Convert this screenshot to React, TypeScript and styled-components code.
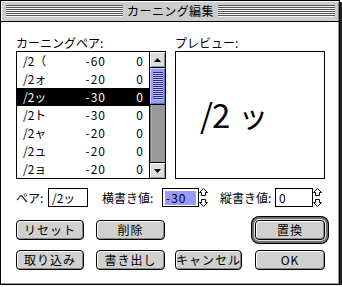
import React from "react";
import styled, { createGlobalStyle } from "styled-components";

const Global = createGlobalStyle`
  html, body { margin: 0; padding: 0; background: #fff; }
  body {
    font-family: "Noto Sans CJK JP", "Noto Sans", sans-serif;
    font-size: 12px;
    color: #000;
  }
  * { box-sizing: border-box; }
`;

const Window = styled.div`
  width: 340px;
  height: 285px;
  border: 1px solid #000;
  box-shadow: 2px 2px 0 #222;
  display: flex;
  flex-direction: column;
  background: #fff;
`;

const TitleBar = styled.div`
  flex: none;
  height: 21px;
  background: #cccccc;
  border-bottom: 1px solid #000;
  box-shadow: inset 1px 1px 0 #fff, inset -1px 0 0 #888;
  display: flex;
  align-items: center;
  padding: 0 4px 0 5px;
`;

const Stripes = styled.div`
  flex: 1;
  height: 12px;
  background: repeating-linear-gradient(to bottom, #555 0 1px, #f4f4f4 1px 2px);
`;

const TitleText = styled.div`
  flex: none;
  padding: 0 4px;
  font-size: 12px;
  line-height: 20px;
  letter-spacing: 0.4px;
`;

const Content = styled.div`
  flex: 1;
  padding: 14px 0 0 15px;
  display: flex;
  flex-direction: column;
  box-shadow: inset -1px -1px 0 #999;
`;

const TopGrid = styled.div`
  display: grid;
  grid-template-columns: 150px 150px;
  column-gap: 9px;
  row-gap: 1px;
`;

const Label = styled.div`
  font-size: 12px;
  line-height: 14px;
  white-space: nowrap;
`;

const ListBox = styled.div`
  height: 128px;
  border: 1px solid #000;
  display: flex;
`;

const Rows = styled.div`
  flex: 1;
  display: flex;
  flex-direction: column;
`;

const Row = styled.div<{ $selected?: boolean }>`
  height: 18px;
  line-height: 18px;
  display: grid;
  grid-template-columns: 45px 38px 38px;
  padding-left: 6px;
  background: ${(p) => (p.$selected ? "#000" : "#fff")};
  color: ${(p) => (p.$selected ? "#fff" : "#000")};
  white-space: nowrap;
`;

const Cell = styled.span<{ $right?: boolean }>`
  text-align: ${(p) => (p.$right ? "right" : "left")};
  letter-spacing: ${(p) => (p.$right ? "1px" : "0")};
`;

const ScrollBar = styled.div`
  width: 16px;
  border-left: 1px solid #000;
  display: flex;
  flex-direction: column;
`;

const ArrowBtn = styled.div<{ $down?: boolean }>`
  flex: none;
  height: 16px;
  background: #dddddd;
  ${(p) => (p.$down ? "border-top: 1px solid #000;" : "border-bottom: 1px solid #000;")}
  box-shadow: inset 1px 1px 0 #fff, inset -1px -1px 0 #999;
  display: flex;
  align-items: center;
  justify-content: center;
`;

const Thumb = styled.div`
  flex: none;
  height: 37px;
  background: #9c9cff;
  border-bottom: 1px solid #000;
  box-shadow: inset 1px 1px 0 #ccccff, inset -1px -1px 0 #6666cc;
  padding: 4px 2px 4px 3px;
  display: flex;
`;

const Grip = styled.div`
  flex: 1;
  background: repeating-linear-gradient(to bottom, #2a2a8a 0 1px, #c4c4ff 1px 2px);
`;

const Track = styled.div`
  flex: 1;
  background: #999999;
  box-shadow: inset 1px 0 0 #777, inset 2px 0 0 #aaa;
`;

const Preview = styled.div`
  height: 128px;
  border: 1px solid #000;
  display: flex;
  align-items: center;
  padding: 0 0 2px 24px;
  font-size: 33px;
  line-height: 1;
`;

const PreviewPair = styled.span`
  letter-spacing: -1px;
`;

const PreviewSmall = styled.span`
  margin-left: 9px;
  font-size: 30px;
`;

const FieldRow = styled.div`
  margin-top: 9px;
  height: 19px;
  display: flex;
  align-items: center;
`;

const FieldLabel = styled.div<{ $w: number; $ml?: number }>`
  width: ${(p) => p.$w}px;
  margin-left: ${(p) => p.$ml ?? 0}px;
  font-size: 12px;
  line-height: 19px;
  white-space: nowrap;
`;

const InputBox = styled.div<{ $w: number }>`
  width: ${(p) => p.$w}px;
  height: 19px;
  border: 1px solid #000;
  background: #fff;
  display: flex;
  align-items: center;
  padding: 0 2px 0 3px;
  font-size: 12px;
  line-height: 15px;
  white-space: nowrap;
`;

const Selection = styled.span`
  flex: 1;
  height: 14px;
  line-height: 14px;
  margin-left: -1px;
  padding-left: 1px;
  letter-spacing: 1px;
  background: #9999ff;
`;

const Stepper = styled.svg`
  flex: none;
  display: block;
`;

const ButtonGrid = styled.div`
  margin-top: 13px;
  display: grid;
  grid-template-columns: 80px 79px 80px 70px;
  grid-template-rows: 20px 20px;
  row-gap: 10px;
`;

const Button = styled.div<{ $w: number; $default?: boolean }>`
  width: ${(p) => p.$w}px;
  height: 20px;
  border: 1px solid #000;
  border-radius: 4px;
  background: #d0d0d0;
  box-shadow: inset 1px 1px 0 #fff, inset -1px -1px 0 #888
    ${(p) =>
      p.$default ? ", 0 0 0 1px #e0e0e0, 0 0 0 3px #707070, 0 0 0 4px #000" : ""};
  display: flex;
  align-items: center;
  justify-content: center;
  font-size: 12px;
  line-height: 18px;
  letter-spacing: 1px;
  white-space: nowrap;
`;

const Empty = styled.div``;

const rows: [string, string, string][] = [
  ["/2（", "-60", "0"],
  ["/2ォ", "-20", "0"],
  ["/2ッ", "-30", "0"],
  ["/2ト", "-30", "0"],
  ["/2ャ", "-20", "0"],
  ["/2ュ", "-20", "0"],
  ["/2ョ", "-20", "0"],
];

const UpDown = () => (
  <Stepper width="9" height="19" viewBox="0 0 9 19">
    <path
      d="M4.5 0.5 L8.5 4.5 L6.5 4.5 L6.5 7.5 L2.5 7.5 L2.5 4.5 L0.5 4.5 Z"
      fill="#fff"
      stroke="#000"
      strokeWidth="1"
    />
    <path
      d="M4.5 18.5 L8.5 14.5 L6.5 14.5 L6.5 11.5 L2.5 11.5 L2.5 14.5 L0.5 14.5 Z"
      fill="#fff"
      stroke="#000"
      strokeWidth="1"
    />
  </Stepper>
);

export default function App() {
  return (
    <>
      <Global />
      <Window>
        <TitleBar>
          <Stripes />
          <TitleText>カーニング編集</TitleText>
          <Stripes />
        </TitleBar>
        <Content>
          <TopGrid>
            <Label>カーニングペア:</Label>
            <Label>プレビュー:</Label>
            <ListBox>
              <Rows>
                {rows.map((r, i) => (
                  <Row key={i} $selected={i === 2}>
                    <Cell>{r[0]}</Cell>
                    <Cell $right>{r[1]}</Cell>
                    <Cell $right>{r[2]}</Cell>
                  </Row>
                ))}
              </Rows>
              <ScrollBar>
                <ArrowBtn>
                  <svg width="7" height="4" viewBox="0 0 7 4">
                    <path d="M3.5 0 L7 4 L0 4 Z" fill="#000" />
                  </svg>
                </ArrowBtn>
                <Thumb>
                  <Grip />
                </Thumb>
                <Track />
                <ArrowBtn $down>
                  <svg width="7" height="4" viewBox="0 0 7 4">
                    <path d="M0 0 L7 0 L3.5 4 Z" fill="#000" />
                  </svg>
                </ArrowBtn>
              </ScrollBar>
            </ListBox>
            <Preview>
              <PreviewPair>/2</PreviewPair>
              <PreviewSmall>ッ</PreviewSmall>
            </Preview>
          </TopGrid>

          <FieldRow>
            <FieldLabel $w={32}>ペア:</FieldLabel>
            <InputBox $w={40}>/2ッ</InputBox>
            <FieldLabel $w={60} $ml={14}>横書き値:</FieldLabel>
            <InputBox $w={37}>
              <Selection>-30</Selection>
            </InputBox>
            <UpDown />
            <FieldLabel $w={55} $ml={12}>縦書き値:</FieldLabel>
            <InputBox $w={38}>0</InputBox>
            <UpDown />
          </FieldRow>

          <ButtonGrid>
            <Button $w={68}>リセット</Button>
            <Button $w={69}>削除</Button>
            <Empty />
            <Button $w={70} $default>置換</Button>
            <Button $w={68}>取り込み</Button>
            <Button $w={69}>書き出し</Button>
            <Button $w={67}>キャンセル</Button>
            <Button $w={70}>OK</Button>
          </ButtonGrid>
        </Content>
      </Window>
    </>
  );
}
